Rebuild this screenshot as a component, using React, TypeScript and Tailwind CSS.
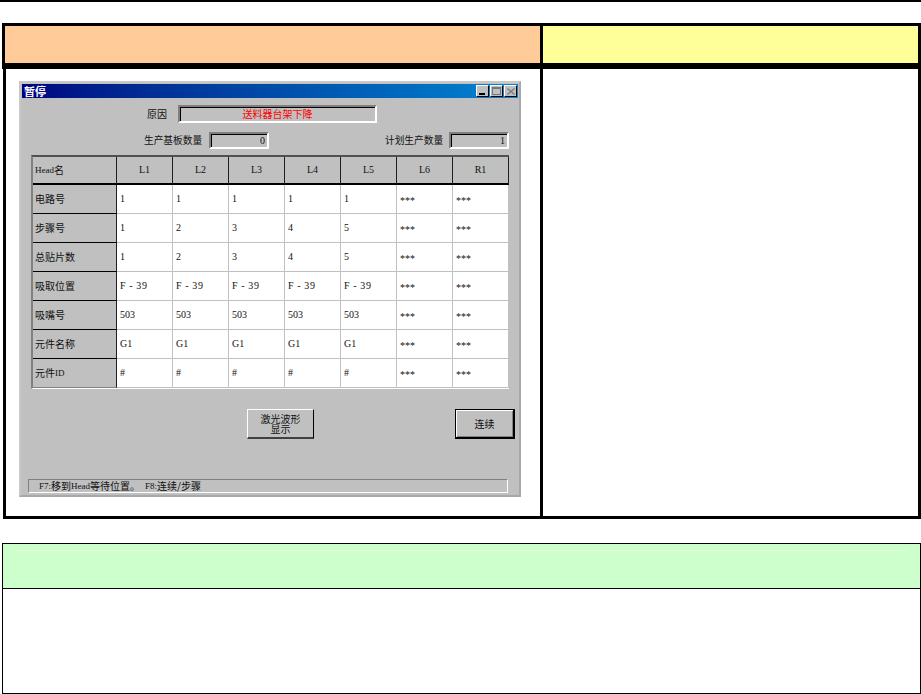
const cols = ["L1", "L2", "L3", "L4", "L5", "L6", "R1"];
const rows: [string, string[]][] = [
  ["电路号", ["1", "1", "1", "1", "1", "***", "***"]],
  ["步骤号", ["1", "2", "3", "4", "5", "***", "***"]],
  ["总贴片数", ["1", "2", "3", "4", "5", "***", "***"]],
  ["吸取位置", ["F - 39", "F - 39", "F - 39", "F - 39", "F - 39", "***", "***"]],
  ["吸嘴号", ["503", "503", "503", "503", "503", "***", "***"]],
  ["元件名称", ["G1", "G1", "G1", "G1", "G1", "***", "***"]],
  ["元件ID", ["#", "#", "#", "#", "#", "***", "***"]],
];
const sunken = "border-2 border-t-[#808080] border-l-[#808080] border-r-white border-b-white shadow-[inset_1px_1px_0_#000]";
const serif = { fontFamily: '"Liberation Serif","Noto Sans CJK SC",serif' };
const cjk = { fontFamily: '"Noto Sans CJK SC","Liberation Sans",sans-serif' };

function WinBtn({ children }: { children: React.ReactNode }) {
  return (
    <div className="w-[13px] h-[12px] bg-[#c0c0c0] border border-t-white border-l-white border-r-black border-b-black flex items-center justify-center">
      {children}
    </div>
  );
}

function Dialog() {
  return (
    <div className="w-[502px] h-[416px] ml-[13px] mt-[12px] bg-[#c0c0c0] border-2 border-[#c8c8c8] border-r-[#a8a8a8] border-b-[#a8a8a8] flex flex-col text-[10px] leading-none text-[#111]" style={cjk}>
      <div className="h-[14px] mx-[1px] mt-[1px] flex items-center justify-between pl-[2px] pr-[1px] bg-gradient-to-r from-[#000080] to-[#1084d0] text-white font-bold text-[11px] shrink-0">
        <span>暂停</span>
        <div className="flex gap-[1px]">
          <WinBtn><svg width="7" height="7"><rect x="0" y="5" width="6" height="2" fill="#000" /></svg></WinBtn>
          <WinBtn><svg width="9" height="8"><rect x="0.5" y="0.5" width="8" height="7" fill="none" stroke="#777" /><rect x="0" y="0" width="9" height="2" fill="#777" /></svg></WinBtn>
          <WinBtn><svg width="8" height="7"><path d="M0.5 0.5L7.5 6.5M7.5 0.5L0.5 6.5" stroke="#777" strokeWidth="1.2" /></svg></WinBtn>
        </div>
      </div>

      <div className="flex items-center h-[18px] mt-[7px] shrink-0">
        <span className="ml-[126px] w-[20px] whitespace-nowrap">原因</span>
        <div className={`${sunken} ml-[11px] w-[199px] h-[18px] text-[#ff0000] flex items-center justify-center`}>
          送料器台架下降
        </div>
      </div>

      <div className="flex items-center h-[17px] mt-[9px] shrink-0">
        <span className="ml-[123px] w-[58px] text-[9.7px] whitespace-nowrap">生产基板数量</span>
        <div className={`${sunken} ml-[7px] w-[60px] h-[17px] flex items-center justify-end pr-[2px]`} style={serif}>0</div>
        <span className="ml-[116px] w-[58px] text-[9.7px] whitespace-nowrap">计划生产数量</span>
        <div className={`${sunken} ml-[6px] w-[60px] h-[17px] flex items-center justify-end pr-[2px]`} style={serif}>1</div>
      </div>

      <div className="ml-[10px] mt-[6px] w-[478px] h-[234px] border-t-2 border-l-2 border-t-[#505050] border-l-[#808080] border-b border-b-white bg-white grid grid-cols-[84px_repeat(7,56px)] grid-rows-[28px_repeat(7,29px)] shrink-0">
        <div className="bg-[#c0c0c0] border-b-2 border-b-black border-r border-r-[#202020] flex items-center pl-[2px]"><span className="text-[9px]" style={serif}>Head</span>名</div>
        {cols.map((c) => (
          <div key={c} className="bg-[#c0c0c0] border-b-2 border-b-black border-r border-r-[#202020] flex items-center justify-center" style={serif}>{c}</div>
        ))}
        {rows.map(([name, vals], r) => [
          <div key={name} className={`bg-[#c0c0c0] border-b border-r border-r-[#202020] flex items-center pl-[2px] ${r === 6 ? "border-b-[#808080]" : "border-b-black"}`}>
            {name === "元件ID" ? <>元件<span className="text-[9px]" style={serif}>ID</span></> : name}
          </div>,
          ...vals.map((v, i) => (
            <div key={name + i} className={`bg-white border-b border-b-[#c0c0c0] border-r border-r-[#c0c0c0] flex items-center pl-[3px] whitespace-pre ${v === "***" ? "pt-[4px]" : ""} ${v.startsWith("F") ? "tracking-[0.6px]" : ""}`} style={serif}>{v}</div>
          )),
        ])}
      </div>

      <div className="flex mt-[20px] shrink-0">
        <div className="ml-[226px] w-[67px] h-[30px] bg-[#c0c0c0] border border-t-white border-l-white border-r-black border-b-2 border-b-[#404040] flex items-center justify-center text-center leading-[10px]">激光波形<br />显示</div>
        <div className="ml-[141px] w-[60px] h-[30px] bg-[#c0c0c0] border border-r-2 border-b-2 border-black shadow-[inset_1px_1px_0_#fff,inset_-1px_-1px_0_#808080] flex items-center justify-center">连续</div>
      </div>

      <div className="ml-[7px] mr-[11px] mt-[40px] h-[14px] border border-t-[#808080] border-l-[#808080] border-r-white border-b-white flex items-center pl-[10px] whitespace-pre shrink-0">
        <span className="text-[9px]" style={serif}>F7:</span>移到<span className="text-[9px]" style={serif}>Head</span>等待位置。
        <span className="text-[9px] ml-[5px]" style={serif}>F8:</span>连续/步骤
      </div>
    </div>
  );
}

export default function App() {
  return (
    <div className="w-[921px] h-[694px] bg-white overflow-hidden flex flex-col">
      <div className="h-[2px] bg-black shrink-0" />
      <div className="ml-[2px] mt-[21px] h-[46px] border-[3px] border-b-[6px] border-black flex shrink-0">
        <div className="w-[535px] bg-[#ffcc99]" />
        <div className="w-[3px] bg-black" />
        <div className="flex-1 bg-[#ffff99]" />
      </div>
      <div className="ml-[3px] h-[450px] border-[3px] border-t-0 border-black flex shrink-0">
        <div className="w-[534px]"><Dialog /></div>
        <div className="w-[3px] bg-black" />
        <div className="flex-1" />
      </div>
      <div className="ml-[2px] mt-[24px] h-[151px] border border-black flex flex-col shrink-0">
        <div className="h-[45px] bg-[#ccffcc] border-b border-black shrink-0 pt-[6px] px-[13px]">
          <div className="h-[1px] bg-[#e4ffe4]" />
        </div>
        <div className="flex-1" />
      </div>
    </div>
  );
}
